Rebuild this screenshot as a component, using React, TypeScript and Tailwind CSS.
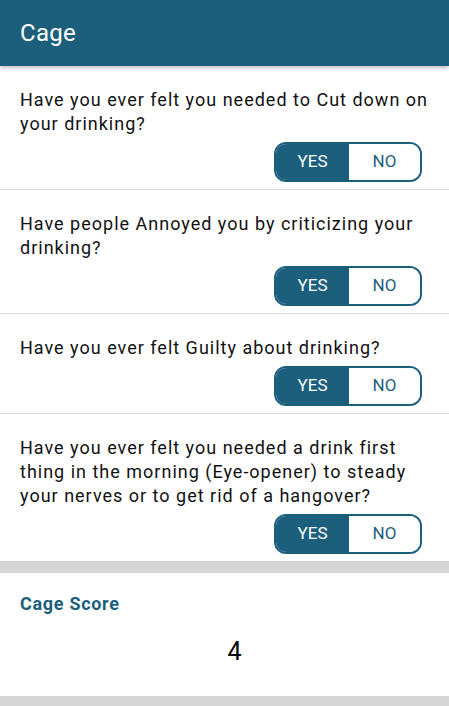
import React from "react";

const questions = [
  "Have you ever felt you needed to Cut down on your drinking?",
  "Have people Annoyed you by criticizing your drinking?",
  "Have you ever felt Guilty about drinking?",
  "Have you ever felt you needed a drink first thing in the morning (Eye-opener) to steady your nerves or to get rid of a hangover?",
];

function Toggle() {
  return (
    <div className="flex h-[40px] w-[148px] overflow-hidden rounded-[12px] border-2 border-[#1b5f7d]">
      <div className="flex w-[73px] items-center justify-center bg-[#1b5f7d] text-[17px] text-white">YES</div>
      <div className="flex flex-1 items-center justify-center bg-white text-[17px] text-[#1b5f7d]">NO</div>
    </div>
  );
}

export default function App() {
  return (
    <div className="flex h-[706px] w-[449px] flex-col overflow-hidden bg-[#d6d6d6] font-['Roboto',sans-serif]">
      <div className="relative z-10 flex h-[66px] items-center bg-[#1b5f7d] px-[20px] shadow-[0_2px_4px_rgba(0,0,0,0.25)]">
        <span className="text-[24px] tracking-[0.3px] text-white">Cage</span>
      </div>
      <div className="bg-white">
        {questions.map((q, i) => (
          <div key={i} className={i < questions.length - 1 ? "border-b border-[#dcdcdc]" : ""}>
            <div className="flex flex-col px-[20px] pb-[7px] pt-[22px]">
              <p className="text-[18px] leading-[24px] tracking-[1px] text-[#111]">{q}</p>
              <div className="mt-[6px] flex justify-end pr-[7px]">
                <Toggle />
              </div>
            </div>
          </div>
        ))}
      </div>
      <div className="mt-[12px] flex h-[123px] flex-col bg-white pl-[20px] pt-[19px]">
        <span className="text-[18px] font-bold leading-[24px] tracking-[0.7px] text-[#1b5f7d]">Cage Score</span>
        <span className="mt-[22px] text-center text-[25px] leading-[28px] text-black">4</span>
      </div>
    </div>
  );
}
